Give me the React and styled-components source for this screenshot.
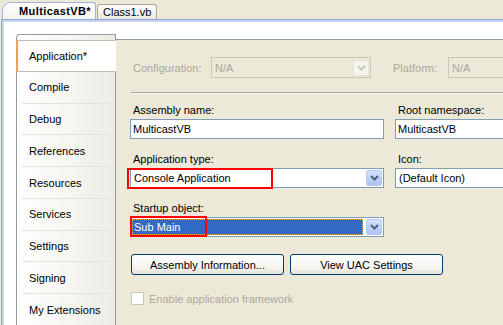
import React from "react";
import styled, { createGlobalStyle, css } from "styled-components";

const Global = createGlobalStyle`
  html, body { margin: 0; padding: 0; background: #ECE9D8; }
  body { font-family: "Liberation Sans", Arial, sans-serif; font-size: 11px; color: #000; }
  * { box-sizing: border-box; }
`;

const Root = styled.div`
  width: 503px;
  height: 325px;
  overflow: hidden;
  background: #ECE9D8;
  display: flex;
  flex-direction: column;
`;

const TabStrip = styled.div`
  display: flex;
  align-items: flex-end;
  height: 19px;
  padding-left: 2px;
  flex: none;
`;

const DocTab = styled.div`
  display: flex;
  align-items: center;
  white-space: nowrap;
  border-bottom: none;
  ${(p) =>
    p.$active
      ? css`
          height: 17px;
          width: 94px;
          padding-left: 16px;
          font-weight: bold;
          letter-spacing: 0.4px;
          border: 1px solid #9FB4D8;
          border-bottom: none;
          border-radius: 9px 3px 0 0;
          background: linear-gradient(180deg, #ffffff 0%, #f4f3ee 100%);
        `
      : css`
          height: 15px;
          width: 60px;
          margin-left: 1px;
          padding-left: 5px;
          border: 1px solid #A8A698;
          border-bottom: none;
          border-radius: 3px 3px 0 0;
          background: linear-gradient(180deg, #fefefe 0%, #e9e7de 100%);
        `}
`;

const Frame = styled.div`
  flex: 1;
  margin-left: 1px;
  border-top: 1px solid #8FA8D3;
  border-left: 1px solid #8FA8D3;
  display: flex;
  min-height: 0;
`;

const FrameInner = styled.div`
  flex: 1;
  border-top: 2px solid #C5D5F1;
  border-left: 2px solid #C5D5F1;
  background: #ffffff;
  padding: 12px 0 0 12px;
  display: flex;
  min-height: 0;
`;

const Nav = styled.div`
  width: 100px;
  flex: none;
  border: 1px solid #919B9C;
  border-bottom: none;
  border-top-left-radius: 4px;
  background: linear-gradient(90deg, #ffffff 0%, #f6f5f0 55%, #ecebe4 100%);
  padding-top: 5px;
  display: flex;
  flex-direction: column;
  position: relative;
  z-index: 1;
`;

const NavItem = styled.div`
  display: flex;
  align-items: center;
  padding-left: 12px;
  white-space: nowrap;
  height: 31px;
  ${(p) =>
    p.$active &&
    css`
      height: 32px;
      margin: 0 -1px 0 -1px;
      padding-left: 11px;
      background: #ffffff;
      border-top: 1px solid #C2C0B6;
      border-bottom: 1px solid #C2C0B6;
      border-left: 2px solid #EDA23D;
    `}
`;

const NavRule = styled.div`
  height: 1px;
  margin: 0 5px;
  background: #E3E2DA;
`;

const Page = styled.div`
  flex: 1;
  margin-top: 5px;
  border-top: 1px solid #919B9C;
  background: #ECE9D8;
  padding: 17px 0 0 14px;
  overflow: hidden;
  min-width: 0;
`;

const Content = styled.div`
  width: 430px;
`;

const ConfigRow = styled.div`
  display: flex;
  align-items: center;
  height: 21px;
  padding-left: 3px;
`;

const DisabledLabel = styled.span`
  color: #ACA899;
  width: ${(p) => p.$w}px;
  flex: none;
  white-space: nowrap;
  margin-left: ${(p) => p.$ml || 0}px;
`;

const DisabledSelect = styled.div`
  width: ${(p) => p.$w}px;
  height: 21px;
  flex: none;
  border: 1px solid #CBC8B9;
  display: flex;
  align-items: center;
  padding: 0 1px 0 3px;
  color: #ACA899;
`;

const SelectText = styled.span`
  flex: 1;
  white-space: nowrap;
`;

const Rule = styled.div`
  height: 1px;
  margin: 14px 0 0 1px;
  background: #ACA899;
  box-shadow: 0 1px 0 #f7f6f0;
`;

const FieldGrid = styled.div`
  display: grid;
  grid-template-columns: 254px 160px;
  column-gap: 11px;
  row-gap: 14px;
  margin-top: 11px;
`;

const Field = styled.div`
  display: flex;
  flex-direction: column;
`;

const Label = styled.div`
  line-height: 13px;
  height: 13px;
  margin-bottom: 2px;
  padding-left: 3px;
  white-space: nowrap;
`;

const TextBox = styled.div`
  height: 20px;
  border: 1px solid #7F9DB9;
  background: #ffffff;
  padding-left: 2px;
  line-height: 18px;
  white-space: nowrap;
`;

const Combo = styled.div`
  position: relative;
  height: 20px;
  border: 1px solid #7F9DB9;
  background: #ffffff;
  display: flex;
  align-items: center;
  padding: 1px;
`;

const ComboValue = styled.div`
  flex: 1;
  height: 16px;
  line-height: 14px;
  padding-left: 1px;
  margin-right: 3px;
  white-space: nowrap;
  border: 1px solid transparent;
  ${(p) =>
    p.$selected &&
    css`
      background: #316AC5;
      color: #ffffff;
      border: 1px dotted #F3B642;
    `}
`;

const DropButton = styled.div`
  width: 16px;
  height: 16px;
  flex: none;
  border-radius: 2px;
  display: flex;
  align-items: center;
  justify-content: center;
  ${(p) =>
    p.$disabled
      ? css`
          border: 1px solid #E3E1D8;
          background: #F5F4EF;
        `
      : css`
          border: 1px solid #B7CBF6;
          background: linear-gradient(180deg, #D3E0FC 0%, #BACEF8 60%, #AFC5F4 100%);
        `}
`;

const Highlight = styled.div`
  position: absolute;
  left: ${(p) => p.$l}px;
  top: ${(p) => p.$t}px;
  width: ${(p) => p.$w}px;
  height: ${(p) => p.$h}px;
  border: 2px solid #FF0000;
  pointer-events: none;
`;

const ButtonRow = styled.div`
  display: flex;
  gap: 6px;
  margin-top: 17px;
  padding-left: 1px;
`;

const XPButton = styled.div`
  width: 153px;
  height: 21px;
  border: 1px solid #003C74;
  border-radius: 3px;
  background: linear-gradient(180deg, #ffffff 0%, #f4f3ee 70%, #e3e0d5 100%);
  display: flex;
  align-items: center;
  justify-content: center;
  white-space: nowrap;
`;

const CheckRow = styled.div`
  display: flex;
  align-items: center;
  gap: 5px;
  margin-top: 17px;
  padding-left: 1px;
  color: #ACA899;
`;

const CheckBox = styled.div`
  width: 13px;
  height: 13px;
  border: 1px solid #CAC8BB;
  background: #ffffff;
  flex: none;
`;

const Chevron = ({ color }) => (
  <svg width="9" height="6" viewBox="0 0 9 6">
    <polyline points="1,1 4.5,4.5 8,1" fill="none" stroke={color} strokeWidth="2" />
  </svg>
);

const navItems = [
  "Compile",
  "Debug",
  "References",
  "Resources",
  "Services",
  "Settings",
  "Signing",
  "My Extensions",
];

export default function App() {
  return (
    <Root>
      <Global />
      <TabStrip>
        <DocTab $active>MulticastVB*</DocTab>
        <DocTab>Class1.vb</DocTab>
      </TabStrip>
      <Frame>
        <FrameInner>
          <Nav>
            <NavItem $active>Application*</NavItem>
            {navItems.map((item, i) => (
              <React.Fragment key={item}>
                {i > 0 && <NavRule />}
                <NavItem>{item}</NavItem>
              </React.Fragment>
            ))}
          </Nav>
          <Page>
            <Content>
              <ConfigRow>
                <DisabledLabel $w={78}>Configuration:</DisabledLabel>
                <DisabledSelect $w={160}>
                  <SelectText>N/A</SelectText>
                  <DropButton $disabled>
                    <Chevron color="#C9C7BA" />
                  </DropButton>
                </DisabledSelect>
                <DisabledLabel $w={55} $ml={22}>Platform:</DisabledLabel>
                <DisabledSelect $w={90}>
                  <SelectText>N/A</SelectText>
                </DisabledSelect>
              </ConfigRow>
              <Rule />
              <FieldGrid>
                <Field>
                  <Label>Assembly name:</Label>
                  <TextBox>MulticastVB</TextBox>
                </Field>
                <Field>
                  <Label>Root namespace:</Label>
                  <TextBox>MulticastVB</TextBox>
                </Field>
                <Field>
                  <Label>Application type:</Label>
                  <Combo>
                    <ComboValue>Console Application</ComboValue>
                    <DropButton>
                      <Chevron color="#4D6185" />
                    </DropButton>
                    <Highlight $l={-4} $t={-1} $w={146} $h={21} />
                  </Combo>
                </Field>
                <Field>
                  <Label>Icon:</Label>
                  <Combo>
                    <ComboValue>(Default Icon)</ComboValue>
                    <DropButton>
                      <Chevron color="#4D6185" />
                    </DropButton>
                  </Combo>
                </Field>
                <Field>
                  <Label>Startup object:</Label>
                  <Combo>
                    <ComboValue $selected>Sub Main</ComboValue>
                    <DropButton>
                      <Chevron color="#4D6185" />
                    </DropButton>
                    <Highlight $l={-1} $t={-2} $w={77} $h={21} />
                  </Combo>
                </Field>
              </FieldGrid>
              <ButtonRow>
                <XPButton>Assembly Information...</XPButton>
                <XPButton>View UAC Settings</XPButton>
              </ButtonRow>
              <CheckRow>
                <CheckBox />
                <span>Enable application framework</span>
              </CheckRow>
            </Content>
          </Page>
        </FrameInner>
      </Frame>
    </Root>
  );
}
